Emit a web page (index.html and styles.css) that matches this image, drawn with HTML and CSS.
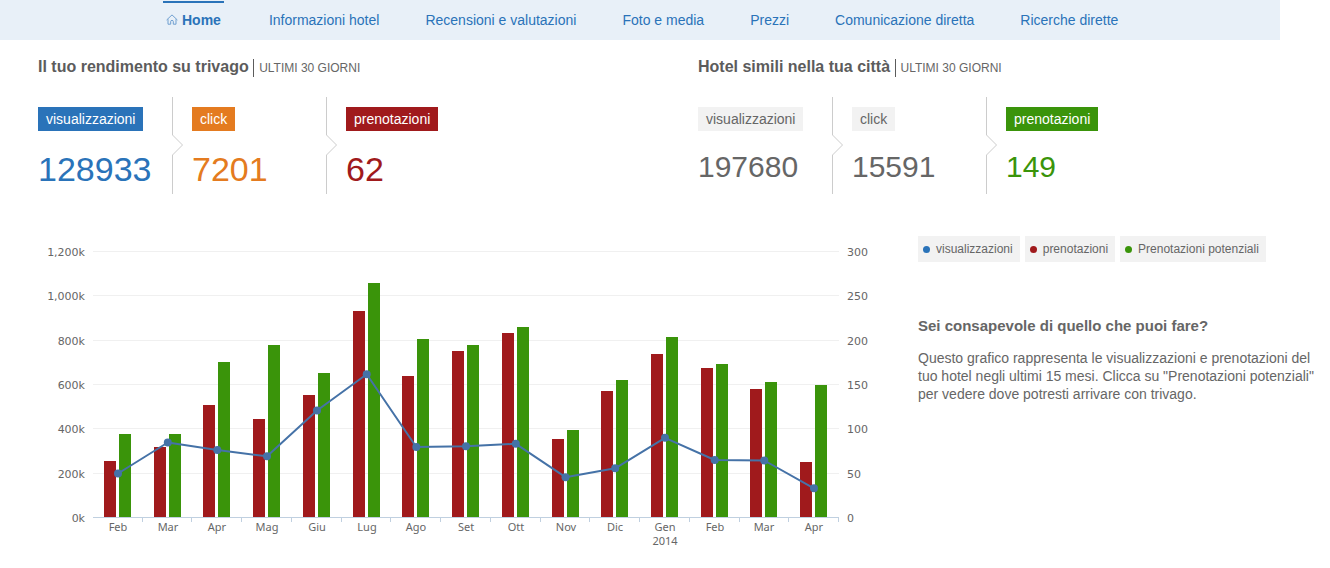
FILE: index.html
```html
<!DOCTYPE html>
<html lang="it">
<head>
<meta charset="utf-8">
<title>trivago Hotel Manager</title>
<link rel="stylesheet" href="styles.css">
</head>
<body>
<nav class="nav">
  <a class="nav-link active" href="#"><svg class="home-icon" width="12" height="11" viewBox="0 0 12 11" aria-hidden="true"><path d="M.6 6 6 .9 11.4 6M2 5.2v5h2.7V7.4q0-1 1.3-1t1.3 1v2.8H10v-5"/></svg>Home</a>
  <a class="nav-link" href="#">Informazioni hotel</a>
  <a class="nav-link" href="#">Recensioni e valutazioni</a>
  <a class="nav-link" href="#">Foto e media</a>
  <a class="nav-link" href="#">Prezzi</a>
  <a class="nav-link" href="#">Comunicazione diretta</a>
  <a class="nav-link" href="#">Ricerche dirette</a>
</nav>
<main class="main">
  <div class="summary">
    <section>
      <h2 class="title">Il tuo rendimento su trivago <span class="period">ULTIMI 30 GIORNI</span></h2>
      <div class="stats large">
        <div class="stat blue"><span class="badge">visualizzazioni</span><strong class="value">128933</strong></div>
        <svg class="divider" width="12" height="97" viewBox="0 0 12 97" aria-hidden="true"><path d="M.5 0v38l10 10-10 10v39"/></svg>
        <div class="stat orange"><span class="badge">click</span><strong class="value">7201</strong></div>
        <svg class="divider" width="12" height="97" viewBox="0 0 12 97" aria-hidden="true"><path d="M.5 0v38l10 10-10 10v39"/></svg>
        <div class="stat red"><span class="badge">prenotazioni</span><strong class="value">62</strong></div>
      </div>
    </section>
    <section>
      <h2 class="title">Hotel simili nella tua città <span class="period">ULTIMI 30 GIORNI</span></h2>
      <div class="stats">
        <div class="stat"><span class="badge">visualizzazioni</span><strong class="value">197680</strong></div>
        <svg class="divider" width="12" height="97" viewBox="0 0 12 97" aria-hidden="true"><path d="M.5 0v38l10 10-10 10v39"/></svg>
        <div class="stat"><span class="badge">click</span><strong class="value">15591</strong></div>
        <svg class="divider" width="12" height="97" viewBox="0 0 12 97" aria-hidden="true"><path d="M.5 0v38l10 10-10 10v39"/></svg>
        <div class="stat green"><span class="badge">prenotazioni</span><strong class="value">149</strong></div>
      </div>
    </section>
  </div>
  <div class="details">
    <svg class="chart" viewBox="38 236 880 320" role="img" aria-label="Visualizzazioni e prenotazioni degli ultimi 15 mesi">
      <path class="grid" d="M93 251.5H839M93 295.5H839M93 340.5H839M93 384.5H839M93 428.5H839M93 473.5H839"/>
      <path class="bars-red" d="M104 517V461h12V517zM154 517V447h12V517zM203 517V405h12V517zM253 517V419h12V517zM303 517V395h12V517zM353 517V311h12V517zM402 517V376h12V517zM452 517V351h12V517zM502 517V333h12V517zM552 517V439h12V517zM601 517V391h12V517zM651 517V354h12V517zM701 517V368h12V517zM750 517V389h12V517zM800 517V462h12V517z"/>
      <path class="bars-green" d="M119 517V434h12V517zM169 517V434h12V517zM218 517V362h12V517zM268 517V345h12V517zM318 517V373h12V517zM368 517V283h12V517zM417 517V339h12V517zM467 517V345h12V517zM517 517V327h12V517zM567 517V430h12V517zM616 517V380h12V517zM666 517V337h12V517zM716 517V364h12V517zM765 517V382h12V517zM815 517V385h12V517z"/>
      <path class="axis" d="M93 517.5H839M142.5 517v5M191.5 517v5M241.5 517v5M291.5 517v5M341.5 517v5M390.5 517v5M440.5 517v5M490.5 517v5M540.5 517v5M589.5 517v5M639.5 517v5M689.5 517v5M739.5 517v5M788.5 517v5M838.5 517v5"/>
      <polyline class="line" points="118,473.5 167.8,442.5 217.3,450 267,456.3 317,410.5 366.7,374.3 416.3,447 466,446.2 515.8,443.8 565.5,477.2 615.2,468.3 665,437.8 714.7,460 764.3,460.5 814,488.3"/>
      <g class="points">
        <circle cx="118" cy="473.5" r="4"/><circle cx="167.8" cy="442.5" r="4"/><circle cx="217.3" cy="450" r="4"/><circle cx="267" cy="456.3" r="4"/><circle cx="317" cy="410.5" r="4"/><circle cx="366.7" cy="374.3" r="4"/><circle cx="416.3" cy="447" r="4"/><circle cx="466" cy="446.2" r="4"/><circle cx="515.8" cy="443.8" r="4"/><circle cx="565.5" cy="477.2" r="4"/><circle cx="615.2" cy="468.3" r="4"/><circle cx="665" cy="437.8" r="4"/><circle cx="714.7" cy="460" r="4"/><circle cx="764.3" cy="460.5" r="4"/><circle cx="814" cy="488.3" r="4"/>
      </g>
      <g class="scale left">
        <text x="85" y="256">1,200k</text><text x="85" y="300">1,000k</text><text x="85" y="345">800k</text><text x="85" y="389">600k</text><text x="85" y="433">400k</text><text x="85" y="478">200k</text><text x="85" y="522">0k</text>
      </g>
      <g class="scale">
        <text x="847" y="256">300</text><text x="847" y="300">250</text><text x="847" y="345">200</text><text x="847" y="389">150</text><text x="847" y="433">100</text><text x="847" y="478">50</text><text x="847" y="522">0</text>
      </g>
      <g class="months">
        <text x="118" y="531">Feb</text><text x="168" y="531">Mar</text><text x="217" y="531">Apr</text><text x="267" y="531">Mag</text><text x="317" y="531">Giu</text><text x="367" y="531">Lug</text><text x="416" y="531">Ago</text><text x="466" y="531">Set</text><text x="516" y="531">Ott</text><text x="566" y="531">Nov</text><text x="615" y="531">Dic</text><text x="665" y="531">Gen</text><text x="665" y="545">2014</text><text x="715" y="531">Feb</text><text x="764" y="531">Mar</text><text x="814" y="531">Apr</text>
      </g>
    </svg>
    <aside>
      <div class="legend">
        <button class="legend-item blue" type="button">visualizzazioni</button>
        <button class="legend-item red" type="button">prenotazioni</button>
        <button class="legend-item green" type="button">Prenotazioni potenziali</button>
      </div>
      <h3 class="info-title">Sei consapevole di quello che puoi fare?</h3>
      <p class="info">Questo grafico rappresenta le visualizzazioni e prenotazioni del tuo hotel negli ultimi 15 mesi. Clicca su "Prenotazioni potenziali" per vedere dove potresti arrivare con trivago.</p>
    </aside>
  </div>
</main>
</body>
</html>
```

FILE: styles.css
```css
* { box-sizing: border-box; }
body {
  margin: 0;
  background: #fff;
  color: #666;
  font: 14px/18px "Liberation Sans", Arial, sans-serif;
}
.blue { --tone: #2a73b9; }
.orange { --tone: #e47b20; }
.red { --tone: #a01a1c; }
.green { --tone: #3a940a; }

.nav {
  display: flex;
  gap: 40px;
  height: 40px;
  margin-right: 50px;
  padding: 1px 0 0 163px;
  background: #e8f0f8;
}
.nav-link {
  display: flex;
  align-items: center;
  padding: 0 3px 4px;
  border-top: 2px solid transparent;
  color: #2a73b9;
  white-space: nowrap;
  text-decoration: none;
}
.nav-link.active {
  margin-right: 2px;
  border-color: #2a73b9;
  font-weight: bold;
}
.home-icon {
  margin-right: 4px;
  fill: none;
  stroke: #6f9fd0;
}

.main { padding: 17px 12px 0 38px; }
.summary { display: grid; grid-template-columns: 33fr 31fr; }
.title {
  margin: 0 0 20px;
  color: #5c5c5c;
  font-size: 16px;
  line-height: 20px;
}
.period {
  display: inline-block;
  padding-left: 5px;
  border-left: 1px solid #5c5c5c;
  color: #666;
  font-size: 12px;
  font-weight: normal;
  line-height: 18px;
}
.stats { display: flex; }
.stat { width: 134px; padding-top: 10px; }
.divider { margin-right: 8px; fill: none; stroke: #ccc; }
.badge {
  display: inline-block;
  padding: 0 8px;
  background: var(--tone, #f2f2f2);
  line-height: 24px;
}
.blue .badge, .orange .badge, .red .badge, .green .badge { color: #fff; }
.value {
  display: block;
  margin-top: 16px;
  color: var(--tone, #666);
  font-size: 30px;
  font-weight: normal;
  line-height: 40px;
}
.large .value { margin-top: 18px; font-size: 34px; }

.details {
  display: grid;
  grid-template-columns: 11fr 5fr;
  margin-top: 42px;
}
.chart { display: block; width: 100%; }
.grid { stroke: #f0f0f0; }
.axis { fill: none; stroke: #c0d0e0; }
.bars-red { fill: #a01a1c; }
.bars-green { fill: #3a940a; }
.line { fill: none; stroke: #4572a7; stroke-width: 2; stroke-linejoin: round; }
.points { fill: #4572a7; }
.scale, .months {
  fill: #666;
  font-family: "DejaVu Sans", sans-serif;
  font-size: 11px;
}
.left { text-anchor: end; }
.months { font-family: "Noto Sans", "Open Sans", sans-serif; text-anchor: middle; }

.legend { display: flex; gap: 5px; }
.legend-item {
  display: flex;
  align-items: center;
  padding: 0 7px 0 5px;
  border: 0;
  background: #f2f2f2;
  color: #666;
  font: 12px/26px "Liberation Sans", Arial, sans-serif;
  white-space: nowrap;
}
.legend-item::before {
  content: "";
  width: 7px;
  height: 7px;
  margin-right: 6px;
  border-radius: 50%;
  background: var(--tone);
}
.info-title { margin: 55px 0 14px; font-size: 15px; line-height: 18px; }
.info { margin: 0; }
```
